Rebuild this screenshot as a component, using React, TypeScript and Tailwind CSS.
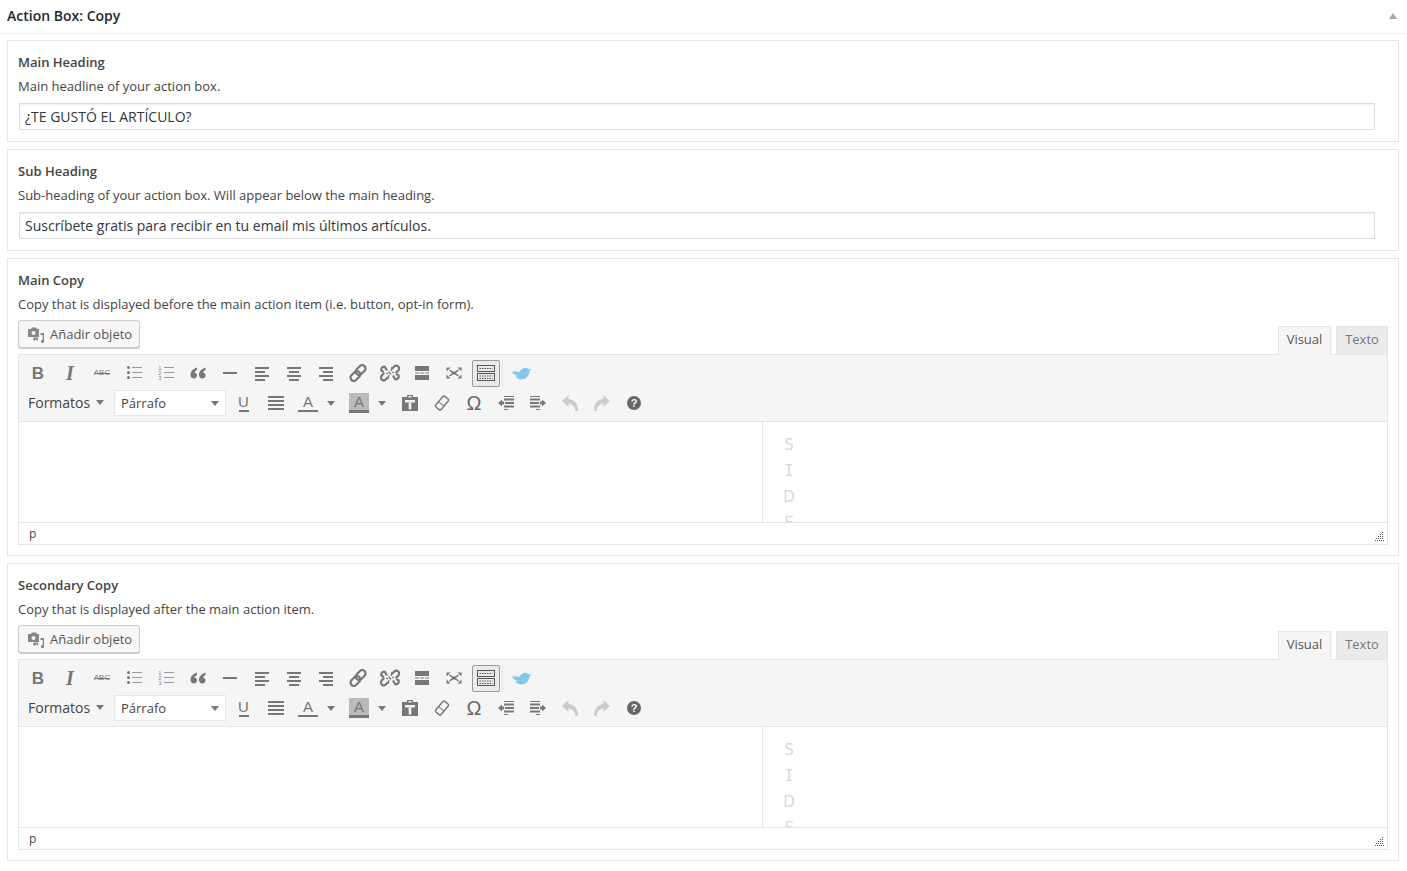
import type { ReactNode } from 'react'

const G = 'fill-[#777]'

function Svg({ children, w = 20, h = 20 }: { children: ReactNode; w?: number; h?: number }) {
  return (
    <svg width={w} height={h} viewBox={`0 0 ${w} ${h}`} className="block">
      {children}
    </svg>
  )
}

function Lines({ rows }: { rows: [number, number, number][] }) {
  return (
    <Svg>
      {rows.map(([x, y, w]) => (
        <rect key={`${x}-${y}`} x={x} y={y} width={w} height={2} className={G} />
      ))}
    </Svg>
  )
}

function Btn({ children, w = 'w-8' }: { children: ReactNode; w?: string }) {
  return <div className={`${w} h-[30px] flex items-center justify-center shrink-0`}>{children}</div>
}

function Caret() {
  return (
    <svg width="8" height="5" viewBox="0 0 8 5" className="block">
      <path d="M0 0h8L4 5z" fill="#777" />
    </svg>
  )
}

function Bold() {
  return <span className="font-['Liberation_Sans',sans-serif] font-bold text-[17px] leading-none text-[#777]">B</span>
}

function Italic() {
  return <span className="font-['Liberation_Serif',serif] italic font-bold text-[20px] leading-none text-[#777]">I</span>
}

function Strike() {
  return (
    <div className="relative font-['Liberation_Sans',sans-serif] text-[8px] leading-none text-[#777]">
      ABC
      <div className="absolute left-0 right-0 top-[4px] h-px bg-[#777]" />
    </div>
  )
}

function BulletList() {
  return (
    <Svg>
      {[4, 9, 14].map((y) => (
        <g key={y}>
          <circle cx="4.500" cy={y + 0.5} r="1.500" className={G} />
          <rect x="8" y={y} width="10" height="1" fill="#999" />
        </g>
      ))}
    </Svg>
  )
}

function NumberList() {
  return (
    <Svg>
      {[4, 9, 14].map((y, i) => (
        <g key={y}>
          <text x="2.500" y={y + 2.500} fontSize="5" fontFamily="Liberation Sans" fill="#777">{i + 1}</text>
          <rect x="8" y={y} width="10" height="1" fill="#999" />
        </g>
      ))}
    </Svg>
  )
}

function Quote() {
  return (
    <Svg>
      <path d="M9 4.500C5.300 5.800 2.500 8.200 2.500 11.800 2.500 14 4 15.500 5.800 15.500 7.500 15.500 9 14.200 9 12.400 9 10.800 7.900 9.700 6.500 9.500 6.800 8.400 7.700 7.500 9 7zM17.500 4.500c-3.700 1.300-6.500 3.700-6.500 7.300 0 2.200 1.500 3.700 3.300 3.700 1.700 0 3.200-1.300 3.200-3.100 0-1.600-1.100-2.700-2.500-2.900.3-1.100 1.200-2 2.500-2.500z" className={G} />
    </Svg>
  )
}

function LinkIcon() {
  return (
    <Svg>
      <g fill="none" stroke="#777" strokeWidth="2.200" transform="rotate(-45 10 10)">
        <rect x="0.500" y="7" width="11" height="6.500" rx="3.200" />
        <rect x="8.500" y="6.500" width="11" height="6.500" rx="3.200" />
      </g>
    </Svg>
  )
}

function UnlinkIcon() {
  return (
    <Svg>
      <g fill="none" stroke="#777" strokeWidth="2.200">
        <path d="M8.200 14l-2.500 2.500a2.800 2.800 0 0 1-4-4L4.300 10" />
        <path d="M11.800 6l2.500-2.500a2.800 2.800 0 0 1 4 4L15.700 10" />
        <path d="M13 12.500l2.300 3.800a2.800 2.800 0 0 0 3-4.200L16 11" />
        <path d="M7 7.500L4.700 3.700a2.800 2.800 0 0 0-3 4.200L4 9" />
      </g>
      <path d="M8 11l-2-1M9 12l-1 4M12 9l2 1M11 8l1-4M8.500 8.500l2.500 3" stroke="#777" strokeWidth="1.200" />
    </Svg>
  )
}

function More() {
  return (
    <Svg>
      <rect x="3" y="3" width="14" height="5" className={G} />
      <rect x="3" y="9.500" width="4" height="1" className={G} />
      <rect x="8" y="9.500" width="4" height="1" className={G} />
      <rect x="13" y="9.500" width="4" height="1" className={G} />
      <rect x="3" y="12" width="14" height="5" className={G} />
    </Svg>
  )
}

function Fullscreen() {
  return (
    <Svg>
      <path d="M2.500 4.500h4L2.500 8.500zM17.500 4.500v4l-4-4zM2.500 15.500v-4l4 4zM17.500 15.500h-4l4-4z" className={G} />
      <path d="M5.500 7l3 2.200h3l3-2.200M5.500 13l3-2.200h3l3 2.200M8.500 9.200v1.600M11.500 9.200v1.600" fill="none" stroke="#777" strokeWidth="1.500" />
    </Svg>
  )
}

function Kitchen() {
  return (
    <div className="w-7 h-[27px] flex items-center justify-center bg-[#ebebeb] border border-[#999] rounded-[2px]">
      <svg width="18" height="16" viewBox="0 0 18 16" className="block">
        <rect x="0.500" y="0.500" width="17" height="6" fill="none" stroke="#555" />
        <rect x="0.500" y="8.500" width="17" height="7" fill="none" stroke="#555" />
        <path d="M2.500 3.500h13M2.500 11h13M2.500 13.500h13" stroke="#555" strokeDasharray="1.500 1" />
      </svg>
    </div>
  )
}

function Bird() {
  return (
    <svg width="20" height="13" viewBox="0 0 20 13" className="block">
      <path d="M0 5c2.500-1.200 5-.8 7 .3C8 3 10.500 .8 13.200 .8c1.400 0 2.700.5 3.500 1.500L19.500 2.500 17.500 4C17.500 9 13.500 12.500 9.500 12.500 6.500 12.500 4.300 11 3.500 9.500L6 9C3.500 8.500 1.500 7 0 5z" fill="#85c6eb" />
    </svg>
  )
}

function UnderlineIcon() {
  return (
    <div className="flex flex-col items-center font-['Liberation_Sans',sans-serif] text-[15px] leading-[14px] text-[#777]">
      U
      <div className="w-[10px] h-[2px] mt-[1px] bg-[#777]" />
    </div>
  )
}

function TextColor() {
  return (
    <div className="flex flex-col items-center font-['Liberation_Sans',sans-serif] text-[15px] leading-[15px] text-[#777]">
      A
      <div className="w-[20px] h-[2px] mt-[1px] bg-[#777]" />
    </div>
  )
}

function BgColor() {
  return (
    <div className="flex flex-col items-center w-[20px] bg-[#bbb] font-['Liberation_Sans',sans-serif] text-[15px] leading-[17px] text-[#777]">
      A
      <div className="w-[20px] h-[3px] bg-[#777]" />
    </div>
  )
}

function Paste() {
  return (
    <Svg>
      <path d="M2 4h5V2h6v2h5v14H2z" className={G} />
      <rect x="5" y="7" width="10" height="2.500" fill="#f5f5f5" />
      <rect x="8.700" y="9.500" width="2.600" height="7" fill="#f5f5f5" />
      <rect x="8.500" y="3" width="3" height="1.500" fill="#f5f5f5" />
    </Svg>
  )
}

function Eraser() {
  return (
    <Svg>
      <g transform="rotate(-50 10 10)">
        <rect x="3" y="6.500" width="14" height="7" rx="1.500" fill="none" stroke="#777" strokeWidth="1.400" />
        <path d="M9 6.500v7" stroke="#777" strokeWidth="1" />
      </g>
    </Svg>
  )
}

function Omega() {
  return <span className="font-['Liberation_Sans',sans-serif] text-[20px] leading-none text-[#666]">Ω</span>
}

function Outdent({ flip }: { flip?: boolean }) {
  return (
    <Svg>
      <g transform={flip ? 'translate(20 0) scale(-1 1)' : undefined}>
        <rect x="8" y="3" width="10" height="1" className={G} />
        <rect x="8" y="5.500" width="10" height="2" className={G} />
        <rect x="9" y="9" width="9" height="2" className={G} />
        <rect x="8" y="12.500" width="10" height="2" className={G} />
        <rect x="8" y="16" width="4" height="1" className={G} />
        <path d="M2 10l4-3.500V8.500h2v3H6v2z" className={G} />
      </g>
    </Svg>
  )
}

function Undo({ flip }: { flip?: boolean }) {
  return (
    <Svg>
      <path
        d="M2 8l6.500-6V6c5.500.5 9.500 4 9.500 12h-2.500c-.5-4.500-3-7-7-7.500V14z"
        fill="#ccc"
        transform={flip ? 'translate(20 0) scale(-1 1)' : undefined}
      />
    </Svg>
  )
}

function Help() {
  return (
    <div className="w-[14px] h-[14px] rounded-full bg-[#666] flex items-center justify-center font-['Liberation_Sans',sans-serif] font-bold text-[11px] leading-none text-[#f5f5f5]">
      ?
    </div>
  )
}

function MediaIcon() {
  return (
    <svg width="18" height="16" viewBox="0 0 18 16" className="block shrink-0">
      <path d="M1 2h3l1-1.500h4L10 2h2v8H1z" fill="#82878c" />
      <circle cx="6.500" cy="6" r="2" fill="#f7f7f7" />
      <path d="M13.500 6H17v8.500a1.500 1.500 0 1 1-1.300-1.400V8h-2.200zM6 12a1.500 1.500 0 1 1 0 .1zM7.500 10.500H11v3h-1.500v-1.500h-2z" fill="#82878c" />
    </svg>
  )
}

function Editor() {
  return (
    <div>
      <div className="flex justify-between items-end h-[34px]">
        <div className="h-[28px] w-[122px] mb-[6px] pl-[8px] pt-[2px] flex items-center gap-[5px] whitespace-nowrap border border-[#ccc] rounded-[3px] bg-[#f7f7f7] shadow-[0_1px_0_#ccc] text-[13px] text-[#555]">
          <MediaIcon />
          <span>Añadir objeto</span>
        </div>
        <div className="flex gap-[5px] items-end">
          <div className="w-[53px] h-[29px] mb-[-1px] pb-[2px] z-10 flex items-center justify-center border border-[#e5e5e5] border-b-0 bg-[#f5f5f5] text-[13px] text-[#555]">
            Visual
          </div>
          <div className="w-[52px] h-[28px] pb-[2px] flex items-center justify-center border border-[#e5e5e5] border-b-0 bg-[#ebebeb] text-[13px] text-[#777]">
            Texto
          </div>
        </div>
      </div>
      <div className="border border-[#e5e5e5]">
        <div className="h-[67px] bg-[#f5f5f5] border-b border-[#e5e5e5] pl-[3px] pt-[3px] flex flex-col">
          <div className="flex items-center h-[30px]">
            <Btn><Bold /></Btn>
            <Btn><Italic /></Btn>
            <Btn><Strike /></Btn>
            <Btn><BulletList /></Btn>
            <Btn><NumberList /></Btn>
            <Btn><Quote /></Btn>
            <Btn><Lines rows={[[3, 9, 14]]} /></Btn>
            <Btn><Lines rows={[[3, 4, 14], [3, 8, 10], [3, 12, 14], [3, 16, 10]]} /></Btn>
            <Btn><Lines rows={[[3, 4, 14], [5, 8, 10], [3, 12, 14], [5, 16, 10]]} /></Btn>
            <Btn><Lines rows={[[3, 4, 14], [7, 8, 10], [3, 12, 14], [7, 16, 10]]} /></Btn>
            <Btn><LinkIcon /></Btn>
            <Btn><UnlinkIcon /></Btn>
            <Btn><More /></Btn>
            <Btn><Fullscreen /></Btn>
            <Btn><Kitchen /></Btn>
            <div className="w-px h-[28px] bg-[#e5e5e5]" />
            <div className="ml-[9px]"><Bird /></div>
          </div>
          <div className="flex items-center h-[30px]">
            <div className="w-[85px] pl-[6px] pb-[2px] flex items-center gap-[6px] text-[14px] text-[#444] shrink-0">
              Formatos
              <Caret />
            </div>
            <div className="w-[112px] h-[26px] ml-[7px] mr-px pl-[6px] pr-[6px] flex items-center justify-between bg-white border border-[#e5e5e5] text-[13px] text-[#444] shrink-0">
              <span className="pt-[2px]">Párrafo</span>
              <Caret />
            </div>
            <Btn w="w-[33px]"><UnderlineIcon /></Btn>
            <Btn><Lines rows={[[2, 3, 16], [2, 7, 16], [2, 11, 16], [2, 15, 16]]} /></Btn>
            <Btn><TextColor /></Btn>
            <Btn w="w-[14px] mr-[5px]"><Caret /></Btn>
            <Btn><BgColor /></Btn>
            <Btn w="w-[14px] mr-[5px]"><Caret /></Btn>
            <Btn><Paste /></Btn>
            <Btn><Eraser /></Btn>
            <Btn><Omega /></Btn>
            <Btn><Outdent /></Btn>
            <Btn><Outdent flip /></Btn>
            <Btn><Undo /></Btn>
            <Btn><Undo flip /></Btn>
            <Btn><Help /></Btn>
          </div>
        </div>
        <div className="h-[100px] flex overflow-hidden bg-white">
          <div className="w-[744px] border-r border-[#e5e5e5]" />
          <div className="w-[52px] pt-[10px] flex flex-col items-center font-['DejaVu_Sans',sans-serif] text-[15px] leading-[26px] text-[#d8d8d8]">
            <span>S</span>
            <span className="font-['DejaVu_Sans_Mono',monospace]">I</span>
            <span>D</span>
            <span>E</span>
          </div>
        </div>
        <div className="relative h-[22px] pl-[10px] flex items-center border-t border-[#e5e5e5] bg-white text-[12px] text-[#444]">
          p
          <svg width="9" height="9" viewBox="0 0 9 9" className="absolute right-[3px] bottom-[3px]">
            {[[7, 0], [5, 2], [7, 2], [3, 4], [5, 4], [7, 4], [1, 6], [3, 6], [5, 6], [7, 6], [0, 8], [2, 8], [4, 8], [6, 8], [8, 8]].map(([x, y]) => (
              <rect key={`${x}-${y}`} x={x} y={y} width="1" height="1" fill="#555" />
            ))}
          </svg>
        </div>
      </div>
    </div>
  )
}

function Card({ title, desc, children }: { title: string; desc: string; children: ReactNode }) {
  return (
    <section className="border border-[#e5e5e5] p-[10px] bg-white">
      <h3 className="text-[13px] leading-[22px] font-semibold text-[#444]">{title}</h3>
      <p className="mt-[2px] text-[13px] leading-[22px] text-[#444]">{desc}</p>
      {children}
    </section>
  )
}

function TextField({ value }: { value: string }) {
  return (
    <div className="mt-[6px] mb-px ml-px w-[1356px] h-[27px] pl-[5px] flex items-center border border-[#ddd] shadow-[inset_0_1px_2px_rgba(0,0,0,0.07)] text-[14px] text-[#32373c]">
      {value}
    </div>
  )
}

export default function App() {
  return (
    <div className="w-[1407px] h-[871px] overflow-hidden bg-white font-['Open_Sans',sans-serif]">
      <header className="h-[34px] pl-[7px] pr-[10px] pb-[2px] flex items-center justify-between border-b border-[#eee]">
        <h2 className="text-[14px] font-semibold text-[#23282d]">Action Box: Copy</h2>
        <svg width="8" height="6" viewBox="0 0 8 6" className="block">
          <path d="M0 6L4 0l4 6z" fill="#a0a5aa" />
        </svg>
      </header>
      <div className="pt-[6px] pl-[7px] w-[1399px] flex flex-col gap-[7px]">
        <Card title="Main Heading" desc="Main headline of your action box.">
          <TextField value="¿TE GUSTÓ EL ARTÍCULO?" />
        </Card>
        <Card title="Sub Heading" desc="Sub-heading of your action box. Will appear below the main heading.">
          <TextField value="Suscríbete gratis para recibir en tu email mis últimos artículos." />
        </Card>
        <Card title="Main Copy" desc="Copy that is displayed before the main action item (i.e. button, opt-in form).">
          <div className="mt-[5px]"><Editor /></div>
        </Card>
        <Card title="Secondary Copy" desc="Copy that is displayed after the main action item.">
          <div className="mt-[5px]"><Editor /></div>
        </Card>
      </div>
    </div>
  )
}
